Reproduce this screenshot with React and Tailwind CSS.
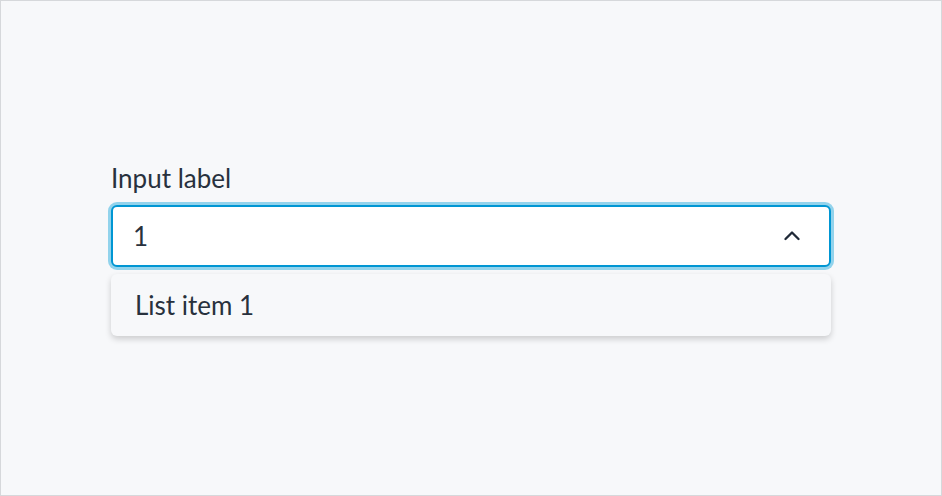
import { useState } from 'react';

function ChevronUp() {
  return (
    <svg width="16" height="16" viewBox="0 0 16 16" fill="none">
      <path d="M1.5 11L8 4.5L14.5 11" stroke="#1f2937" strokeWidth="2.3" strokeLinecap="round" strokeLinejoin="round" />
    </svg>
  );
}

export default function App() {
  const [value] = useState('1');

  return (
    <div className="w-[942px] h-[496px] bg-[#f7f8fa] border border-[#d6d8db] flex flex-col pt-[158px] px-[110px] text-[#28313d] font-['Source_Sans_Pro','Lato','Liberation_Sans',sans-serif]">
      <label className="text-[26px] leading-[38px] mb-[8px]">Input label</label>
      <div className="h-[62px] bg-white border-2 border-[#0096d3] rounded-[6px] shadow-[0_0_0_3px_#92d3ec] flex items-center justify-between pl-[20px] pr-[29px]">
        <span className="text-[26px]">{value}</span>
        <ChevronUp />
      </div>
      <div className="mt-[7px] h-[62px] rounded-[6px] bg-[#f7f8fa] shadow-[0_3px_6px_rgba(0,0,0,0.18)] flex items-center pl-[24px]">
        <span className="text-[26px]">List item 1</span>
      </div>
    </div>
  );
}
